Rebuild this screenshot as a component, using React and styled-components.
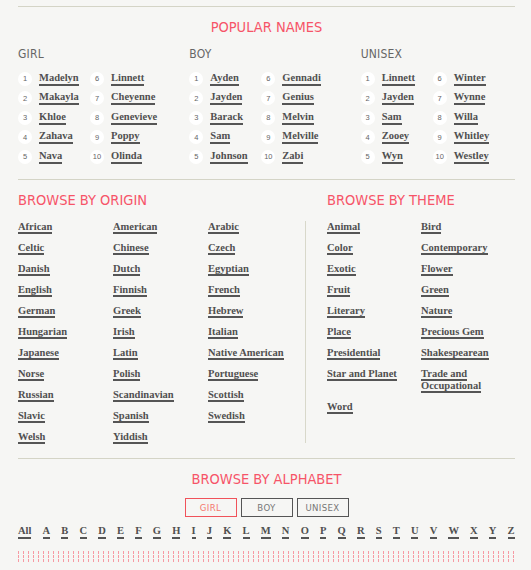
import React from "react";
import styled, { createGlobalStyle } from "styled-components";

const GlobalStyle = createGlobalStyle`
    body {
        margin: 0;
        background: #f6f6f4;
    }
`;

const PINK = "#f65468";
const INK = "#505050";

const Page = styled.div`
    width: 497px;
    padding: 6px 16px 0 18px;
`;

const Divider = styled.hr`
    margin: 0;
    border: 0;
    border-top: 1px solid #d4d4c6;
`;

const Heading = styled.h2`
    margin: 0;
    font-family: "DejaVu Sans Condensed", "Liberation Sans Narrow", "Liberation Sans", sans-serif;
    font-stretch: condensed;
    font-weight: 400;
    font-size: 14.5px;
    line-height: 20px;
    letter-spacing: 0px;
    color: ${PINK};
    text-align: ${(p) => (p.$center ? "center" : "left")};
    padding-left: ${(p) => p.$indent || 0}px;
`;

const Section = styled.section`
    padding: ${(p) => p.$pad || "10px 0 14px"};
`;

const GenderGrid = styled.div`
    display: grid;
    grid-template-columns: repeat(3, 1fr);
    column-gap: 17px;
    margin-top: 9px;
`;

const GenderLabel = styled.h3`
    margin: 0 0 7px;
    font-family: "DejaVu Sans Condensed", "Liberation Sans Narrow", "Liberation Sans", sans-serif;
    font-stretch: condensed;
    font-weight: 400;
    font-size: 12px;
    line-height: 16px;
    letter-spacing: 0.2px;
    color: #666;
`;

const RankList = styled.ol`
    list-style: none;
    margin: 0;
    padding: 0;
    display: grid;
    grid-template-columns: 72px 72px;
    grid-template-rows: repeat(5, 19.5px);
    grid-auto-flow: column;
`;

const RankItem = styled.li`
    display: flex;
    align-items: center;
    gap: 7px;
`;

const Badge = styled.span`
    width: 14px;
    height: 14px;
    border-radius: 50%;
    background: #fff;
    display: flex;
    align-items: center;
    justify-content: center;
    font-family: "Liberation Sans", sans-serif;
    font-size: 7.5px;
    color: #666;
    flex: none;
`;

const NameLink = styled.a`
    font-family: "Liberation Serif", serif;
    font-weight: 700;
    font-size: 10.5px;
    line-height: 12px;
    color: ${INK};
    text-decoration: none;
    border-bottom: 2px solid #555;
`;

const BrowseGrid = styled.div`
    display: grid;
    grid-template-columns: 287px 1fr;
    grid-template-rows: auto 1fr;
    row-gap: 11px;
`;

const LinkGrid = styled.ul`
    list-style: none;
    margin: 0;
    padding: 0 0 0 ${(p) => p.$indent || 0}px;
    display: grid;
    grid-template-columns: repeat(${(p) => p.$cols}, ${(p) => p.$width}px);
    row-gap: 9px;
    align-content: start;
    border-left: ${(p) => (p.$rule ? "1px solid #d8d8ca" : "0")};
`;

const LinkCell = styled.li`
    padding-right: 8px;
    font-family: "Liberation Serif", serif;
    font-weight: 700;
    font-size: 10.5px;
    line-height: 12px;
`;

const ToggleRow = styled.div`
    display: flex;
    justify-content: center;
    gap: 4px;
    margin-top: 9px;
`;

const Toggle = styled.button`
    width: 52px;
    height: 19px;
    padding: 0;
    background: transparent;
    border: 1px solid ${(p) => (p.$active ? "#f0525a" : "#555")};
    color: ${(p) => (p.$active ? "#f4766f" : "#777")};
    font-family: "DejaVu Sans Condensed", "Liberation Sans Narrow", "Liberation Sans", sans-serif;
    font-stretch: condensed;
    font-size: 9.5px;
    letter-spacing: 0.4px;
`;

const Letters = styled.div`
    display: flex;
    justify-content: space-between;
    margin-top: 8px;
    font-family: "Liberation Serif", serif;
    font-size: 10.5px;
    line-height: 12px;
`;

const Dots = styled.div`
    height: 11px;
    margin-top: 12px;
    background: repeating-linear-gradient(90deg, #f79aa3 0 1px, transparent 1px 5px);
    -webkit-mask-image: repeating-linear-gradient(180deg, #000 0 3px, transparent 3px 4px);
    mask-image: repeating-linear-gradient(180deg, #000 0 3px, transparent 3px 4px);
`;

const popular = {
    GIRL: ["Madelyn", "Makayla", "Khloe", "Zahava", "Nava", "Linnett", "Cheyenne", "Genevieve", "Poppy", "Olinda"],
    BOY: ["Ayden", "Jayden", "Barack", "Sam", "Johnson", "Gennadi", "Genius", "Melvin", "Melville", "Zabi"],
    UNISEX: ["Linnett", "Jayden", "Sam", "Zooey", "Wyn", "Winter", "Wynne", "Willa", "Whitley", "Westley"],
};

const origins = [
    "African", "American", "Arabic", "Celtic", "Chinese", "Czech", "Danish", "Dutch", "Egyptian",
    "English", "Finnish", "French", "German", "Greek", "Hebrew", "Hungarian", "Irish", "Italian",
    "Japanese", "Latin", "Native American", "Norse", "Polish", "Portuguese", "Russian", "Scandinavian",
    "Scottish", "Slavic", "Spanish", "Swedish", "Welsh", "Yiddish",
];

const themes = [
    "Animal", "Bird", "Color", "Contemporary", "Exotic", "Flower", "Fruit", "Green", "Literary", "Nature",
    "Place", "Precious Gem", "Presidential", "Shakespearean", "Star and Planet", "Trade and Occupational", "Word",
];

const letters = ["All", ..."ABCDEFGHIJKLMNOPQRSTUVWXYZ".split("")];

function App() {
    return (
        <>
            <GlobalStyle />
            <Page>
                <Divider />
                <Section $pad="10px 0 12px">
                    <Heading $center>POPULAR NAMES</Heading>
                    <GenderGrid>
                        {Object.entries(popular).map(([label, names]) => (
                            <div key={label}>
                                <GenderLabel>{label}</GenderLabel>
                                <RankList>
                                    {names.map((name, i) => (
                                        <RankItem key={i}>
                                            <Badge>{i + 1}</Badge>
                                            <NameLink href="#">{name}</NameLink>
                                        </RankItem>
                                    ))}
                                </RankList>
                            </div>
                        ))}
                    </GenderGrid>
                </Section>
                <Divider />
                <Section $pad="10px 0 15px">
                    <BrowseGrid>
                        <Heading>BROWSE BY ORIGIN</Heading>
                        <Heading $indent={22}>BROWSE BY THEME</Heading>
                        <LinkGrid $cols={3} $width={95}>
                            {origins.map((o) => (
                                <LinkCell key={o}>
                                    <NameLink href="#">{o}</NameLink>
                                </LinkCell>
                            ))}
                        </LinkGrid>
                        <LinkGrid $cols={2} $width={94} $indent={21} $rule>
                            {themes.map((t) => (
                                <LinkCell key={t}>
                                    <NameLink href="#">{t}</NameLink>
                                </LinkCell>
                            ))}
                        </LinkGrid>
                    </BrowseGrid>
                </Section>
                <Divider />
                <Section $pad="10px 0 0">
                    <Heading $center>BROWSE BY ALPHABET</Heading>
                    <ToggleRow>
                        <Toggle $active>GIRL</Toggle>
                        <Toggle>BOY</Toggle>
                        <Toggle>UNISEX</Toggle>
                    </ToggleRow>
                    <Letters>
                        {letters.map((l) => (
                            <NameLink key={l} href="#">{l}</NameLink>
                        ))}
                    </Letters>
                    <Dots />
                </Section>
            </Page>
        </>
    );
}

export default App;
